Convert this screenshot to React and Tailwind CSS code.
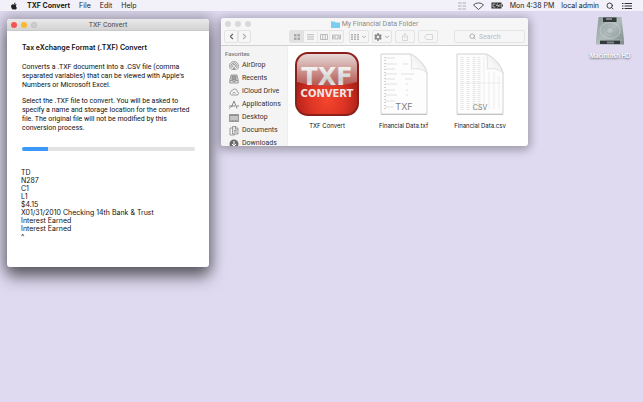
import { FaApple, FaCog } from "react-icons/fa"
import { Search, ChevronLeft, ChevronRight, ChevronDown } from "lucide-react"

const menus = ["File", "Edit", "Help"]

const records = ["TD", "N287", "C1", "L1", "$4.15", "X01/31/2010 Checking 14th Bank & Trust", "Interest Earned", "Interest Earned", "^"]

const SideIcon = ({ children }) => (
    <svg viewBox="0 0 20 20" className="w-[10px] h-[10px] shrink-0" fill="none" stroke="#808080" strokeWidth="1.5">
        {children}
    </svg>
)

const favorites = [
    {
        name: "AirDrop",
        icon: (
            <SideIcon>
                <path d="M5 17.500a9 9 0 1 1 10 0" />
                <path d="M6 14.500a6 6 0 1 1 8 0" />
                <path d="M8 12a3 3 0 1 1 4 0" />
                <path d="M10 11l4 7H6z" fill="#999" stroke="none" />
            </SideIcon>
        ),
    },
    {
        name: "Recents",
        icon: (
            <SideIcon>
                <path d="M4 2h12l2.5 11v5h-17v-5z" fill="#dcdcdc" />
                <path d="M6 4h8v8H6z" fill="#a0a0a0" stroke="#8a8a8a" />
                <path d="M2 13h5l1 2h4l1-2h5" />
            </SideIcon>
        ),
    },
    {
        name: "iCloud Drive",
        icon: (
            <SideIcon>
                <path d="M5 16a4 4 0 0 1-.5-7.500a3 3 0 0 1 3-2.500a5 5 0 0 1 9 3.500a3.300 3.300 0 0 1-.5 6.500z" />
                <path d="M7 13l3-3 3 3" />
            </SideIcon>
        ),
    },
    {
        name: "Applications",
        icon: (
            <SideIcon>
                <path d="M10 2L5 14M10 2l6 15M0 12h12M15 12h5M1 17l2-3" stroke="#666" />
            </SideIcon>
        ),
    },
    {
        name: "Desktop",
        icon: (
            <SideIcon>
                <path d="M1 3h18v14H1z" fill="#c4c4c4" />
                <path d="M1 5h18" />
                <path d="M3 15h14" strokeDasharray="2 1" />
            </SideIcon>
        ),
    },
    {
        name: "Documents",
        icon: (
            <SideIcon>
                <path d="M7 1h7l4 4v11H7z" fill="#e5e5e5" />
                <path d="M7 4H2v14h9v-2" />
                <path d="M13 1v5h5M10 9h5M10 12h5" />
            </SideIcon>
        ),
    },
    {
        name: "Downloads",
        icon: (
            <SideIcon>
                <circle cx="10" cy="10" r="9" fill="#6c6c6c" stroke="none" />
                <path d="M10 4v10M6 10l4 4 4-4" stroke="#fff" strokeWidth="2" />
            </SideIcon>
        ),
    },
]

const MenuBar = () => (
    <header className="relative z-10 flex h-[11px] items-center justify-between bg-[#f2f0f8] pl-[10px] pr-[11px] text-[7px] leading-[11px] text-[#222]">
        <nav className="flex items-center gap-[9px]">
            <button aria-label="Apple menu">
                <FaApple className="size-[8px]" />
            </button>
            <button className="font-bold">TXF Convert</button>
            {menus.map((menu) => (
                <button key={menu}>{menu}</button>
            ))}
        </nav>
        <div className="flex items-center gap-[7px]">
            <svg viewBox="0 0 16 16" className="size-[8px]" fill="#cfcdd6">
                <path d="M0 0h7v4H0zM9 0h7v4H9zM0 6h7v4H0zM9 6h7v4H9zM0 12h7v4H0zM9 12h7v4H9z" />
            </svg>
            <svg viewBox="0 0 22 16" className="h-[8px] w-[11px]" fill="none" stroke="#444" strokeWidth="1.800">
                <path d="M1 6a14 14 0 0 1 20 0L11 15z" />
            </svg>
            <svg viewBox="0 0 24 14" className="h-[7px] w-[12px]">
                <path d="M1 1h20v12H1zM22 5h2v4h-2z" fill="#333" />
                <path d="M4 4h5M4 10h5M4 4v6M13 3l-2 4h5l-3 4M18 4v6" stroke="#ddd" strokeWidth="1.500" fill="none" />
            </svg>
            <span>Mon 4:38 PM</span>
            <span>local admin</span>
            <Search className="size-[8px]" strokeWidth={2.5} />
            <svg viewBox="0 0 20 16" className="ml-[1px] h-[8px] w-[10px]" stroke="#333" strokeWidth="2">
                <path d="M0 3h3M5 3h15M0 8h3M5 8h15M0 13h3M5 13h15" />
            </svg>
        </div>
    </header>
)

const ConvertWindow = () => (
    <section className="absolute left-[7px] top-[19px] w-[202px] rounded-[3px] bg-white shadow-[0_0_12px_4px_rgba(0,0,0,0.22),0_10px_16px_rgba(0,0,0,0.5)]">
        <div className="relative flex h-[12px] items-center rounded-t-[3px] border-b border-[#c9c9c9] bg-linear-to-b from-[#e9e9e9] to-[#d3d3d3] px-[4px]">
            <div className="flex gap-[4px]">
                <button aria-label="Close" className="size-[6px] rounded-full bg-[#f4534e]" />
                <button aria-label="Minimize" className="size-[6px] rounded-full bg-[#fbb92f]" />
                <button aria-label="Zoom" disabled className="size-[6px] rounded-full border border-[#bfbfbf] bg-[#cfcfcf]" />
            </div>
            <h1 className="absolute inset-x-0 text-center font-[Roboto,sans-serif] text-[7px] leading-[12px] text-[#484848]">TXF Convert</h1>
        </div>
        <div className="px-[14px] pb-[26px] pt-[12px] text-[7px] text-[#111]">
            <h2 className="pl-[1px] font-semibold leading-[9px]">Tax eXchange Format (.TXF) Convert</h2>
            <p className="mt-[11px] pl-[1px] font-[Roboto,sans-serif] leading-[9px]">
                Converts a .TXF document into a .CSV file (comma<br />
                separated variables) that can be viewed with Apple's<br />
                Numbers or Microsoft Excel.
            </p>
            <p className="mt-[7px] pl-[1px] font-[Roboto,sans-serif] leading-[9px]">
                Select the .TXF file to convert. You will be asked to<br />
                specify a name and storage location for the converted<br />
                file. The original file will not be modified by this<br />
                conversion process.
            </p>
            <div role="progressbar" aria-label="Conversion" aria-valuenow={15} className="ml-[1px] mt-[14px] h-[4px] overflow-hidden rounded-full bg-[#e2e2e2]">
                <div className="h-full w-[15%] bg-[#3b99fc]" />
            </div>
            <div className="mt-[18px] leading-[8px]">
                {records.map((line, index) => (
                    <p key={index}>{line}</p>
                ))}
            </div>
        </div>
    </section>
)

const ToolButton = ({ label, className, children }) => (
    <button aria-label={label} className={`flex h-[13px] items-center justify-center rounded-[2px] border border-[#e3e3e3] ${className}`}>
        {children}
    </button>
)

const Toolbar = () => (
    <div className="flex items-center pb-[2px] pl-[3px] pr-[3px] text-[#a8a8a8]">
        <ToolButton label="Back" className="w-[14px]">
            <ChevronLeft className="size-[9px] text-[#666]" strokeWidth={3} />
        </ToolButton>
        <ToolButton label="Forward" className="w-[13px]">
            <ChevronRight className="size-[9px] text-[#b0b0b0]" strokeWidth={3} />
        </ToolButton>
        <div className="ml-[38px] flex h-[13px] overflow-hidden rounded-[2px] border border-[#e3e3e3]">
            <button aria-label="Icon view" className="flex w-[14px] items-center justify-center bg-[#e2e2e2]">
                <svg viewBox="0 0 12 12" className="size-[6px]" fill="#a8a8a8">
                    <path d="M0 0h5v5H0zM7 0h5v5H7zM0 7h5v5H0zM7 7h5v5H7z" />
                </svg>
            </button>
            <button aria-label="List view" className="flex w-[13px] items-center justify-center">
                <svg viewBox="0 0 14 12" className="h-[6px] w-[7px]" stroke="#b5b5b5" strokeWidth="1.500">
                    <path d="M0 1h14M0 4.500h14M0 8h14M0 11.500h14" />
                </svg>
            </button>
            <button aria-label="Column view" className="flex w-[13px] items-center justify-center border-x border-[#e8e8e8]">
                <svg viewBox="0 0 16 12" className="h-[6px] w-[8px] shrink-0" fill="none" stroke="#aaa" strokeWidth="1.500">
                    <path d="M1 1h14v10H1zM5.500 1v10M10.500 1v10" />
                </svg>
            </button>
            <button aria-label="Gallery view" className="flex w-[13px] items-center justify-center">
                <svg viewBox="0 0 18 12" className="h-[6px] w-[9px]" fill="none" stroke="#aaa" strokeWidth="1.500">
                    <path d="M1 1v10M3.500 1v10M6 2h6v8H6zM14.500 1v10M17 1v10" />
                </svg>
            </button>
        </div>
        <ToolButton label="Arrange" className="ml-[5px] w-[20px] gap-[2px]">
            <svg viewBox="0 0 16 12" className="h-[6px] w-[8px]" fill="#b0b0b0">
                <path d="M0 0h4v3H0zM6 0h4v3H6zM12 0h4v3h-4zM0 4.500h4v3H0zM6 4.500h4v3H6zM12 4.500h4v3h-4zM0 9h4v3H0zM6 9h4v3H6zM12 9h4v3h-4z" />
            </svg>
            <ChevronDown className="size-[6px]" strokeWidth={4} />
        </ToolButton>
        <ToolButton label="Action" className="ml-[3px] w-[20px] gap-[2px]">
            <FaCog className="size-[8px] text-[#8a8a8a]" />
            <ChevronDown className="size-[6px]" strokeWidth={4} />
        </ToolButton>
        <ToolButton label="Share" className="ml-[3px] w-[20px]">
            <svg viewBox="0 0 12 16" className="h-[8px] w-[6px]" fill="none" stroke="#ccc" strokeWidth="1.500">
                <path d="M4 6H1v9h10V6H8M6 11V1M3.500 3.500L6 1l2.500 2.500" />
            </svg>
        </ToolButton>
        <ToolButton label="Tags" className="ml-[3px] w-[20px]">
            <svg viewBox="0 0 18 12" className="h-[6px] w-[9px]" fill="none" stroke="#ccc" strokeWidth="1.500">
                <path d="M5 1h12v10H5L1 6z" />
            </svg>
        </ToolButton>
        <label className="ml-auto flex h-[13px] w-[71px] items-center gap-[3px] rounded-[2px] border border-[#e3e3e3] pl-[14px]">
            <Search className="size-[7px] shrink-0" strokeWidth={3} />
            <input aria-label="Search" placeholder="Search" className="w-full min-w-0 font-[Roboto,sans-serif] text-[7px] leading-[10px] placeholder:text-[#bbb] focus:outline-none" />
        </label>
    </div>
)

const AppIcon = () => (
    <svg viewBox="0 0 66 66" className="size-[66px]">
        <defs>
            <linearGradient id="gloss" x1="0" y1="0" x2="0" y2="1">
                <stop offset="0" stopColor="#e6dad8" />
                <stop offset="1" stopColor="#b4534c" />
            </linearGradient>
            <radialGradient id="glow" cx="0.5" cy="0.78" r="0.6">
                <stop offset="0" stopColor="#f5452e" />
                <stop offset="0.5" stopColor="#dc3424" />
                <stop offset="1" stopColor="#a31d15" />
            </radialGradient>
            <linearGradient id="steel" x1="0" y1="0" x2="0" y2="1">
                <stop offset="0" stopColor="#fff" />
                <stop offset="0.6" stopColor="#d0d0d0" />
                <stop offset="1" stopColor="#f8f8f8" />
            </linearGradient>
        </defs>
        <rect x="1" y="1" width="64" height="64" rx="13" fill="#8b1f19" />
        <rect x="3" y="3" width="60" height="60" rx="11" fill="url(#glow)" />
        <path d="M3 14a11 11 0 0 1 11-11h38a11 11 0 0 1 11 11v17q-30 8-60 0z" fill="url(#gloss)" />
        <g fontFamily="DejaVu Sans, sans-serif" fontWeight="700" textAnchor="middle">
            <text x="33" y="34" fontSize="24" fill="url(#steel)">TXF</text>
            <text x="33" y="46" fontSize="10" fill="#f0e4e2">CONVERT</text>
        </g>
    </svg>
)

const PageIcon = ({ kind }) => (
    <svg viewBox="0 0 50 64" className="h-[64px] w-[50px]">
        <defs>
            <linearGradient id={`fold-${kind}`} x1="0" y1="1" x2="1" y2="0">
                <stop offset="0" stopColor="#fff" />
                <stop offset="0.5" stopColor="#f4f4f4" />
                <stop offset="1" stopColor="#d4d4d4" />
            </linearGradient>
        </defs>
        <path d="M2 2h29c8 3 15 11 17 19v41H2z" fill="#fdfdfd" stroke="#d2d2d2" />
        <path d="M2 62.500h46" stroke="#c4c4c4" />
        {kind === "TXF" ? (
            <g stroke="#d2d2d2" strokeWidth="0.7">
                <path d="M6 5v54" strokeWidth="2" strokeDasharray="1 2" />
                <path d="M6 6h10M6 12h12M6 17h10M6 22h12M6 27h10M6 32h12M6 38h10M6 43h12M6 49h10M6 55h9M24 12h5M22 22h13M26 27h7M27 32h2M27 38h2M27 43h2" />
            </g>
        ) : (
            <g stroke="#dedede" fill="none">
                <path d="M7 5v54M13 5v54M19 5v54M24 5v54" strokeWidth="3" strokeDasharray="1 1" opacity="0.8" />
                <path d="M29 5v54M34 20v37M39 20v37M44 24v33M5 31h41" strokeWidth="0.5" />
            </g>
        )}
        <path d="M31 2c2 5 2 10 1 15 6-1 12 0 16 4C46 13 39 5 31 2z" fill={`url(#fold-${kind})`} stroke="#d2d2d2" strokeWidth="0.6" />
        <text x="25" y="58" textAnchor="middle" fontSize={kind === "TXF" ? 9 : 7} fill="#808080">{kind}</text>
    </svg>
)

const FinderWindow = () => (
    <section className="absolute left-[221px] top-[18px] w-[307px] overflow-hidden rounded-[3px] bg-white shadow-[0_2px_10px_2px_rgba(0,0,0,0.3)]">
        <div className="border-b border-[#d0d0d0] bg-[#f6f6f6]">
            <div className="relative flex h-[12px] items-center px-[4px]">
                <div className="flex gap-[4px]">
                    <button aria-label="Close" className="size-[6px] rounded-full bg-[#d9d9d9]" />
                    <button aria-label="Minimize" className="size-[6px] rounded-full bg-[#d9d9d9]" />
                    <button aria-label="Zoom" className="size-[6px] rounded-full bg-[#d9d9d9]" />
                </div>
                <div className="absolute inset-x-0 flex items-center justify-center gap-[2px] font-[Roboto,sans-serif] text-[7px] leading-[12px] text-[#8c8c8c]">
                    <svg viewBox="0 0 18 14" className="h-[7px] w-[9px]" fill="#7accf0">
                        <path d="M0 1h7l2 2h9v11H0z" />
                    </svg>
                    <h2>My Financial Data Folder</h2>
                </div>
            </div>
            <Toolbar />
        </div>
        <div className="flex h-[100px]">
            <aside className="w-[67px] shrink-0 overflow-hidden border-r border-[#eee] bg-[#f4f4f4] pl-[4px] pt-[3px] font-[Roboto,sans-serif]">
                <h3 className="text-[6px] font-medium leading-[10px] text-[#777]">Favorites</h3>
                <ul>
                    {favorites.map((item) => (
                        <li key={item.name}>
                            <a href="#" className="flex h-[13px] items-center gap-[3px] whitespace-nowrap pl-[4px] text-[7px] text-[#333]">
                                {item.icon}
                                {item.name}
                            </a>
                        </li>
                    ))}
                </ul>
            </aside>
            <div className="flex pl-[1px] pt-[5px] text-[6px] leading-[9px] text-[#111]">
                <figure className="flex w-[76px] flex-col items-center">
                    <AppIcon />
                    <figcaption className="mt-[4px]">TXF Convert</figcaption>
                </figure>
                <figure className="flex w-[77px] flex-col items-center">
                    <div className="flex h-[66px] items-center"><PageIcon kind="TXF" /></div>
                    <figcaption className="mt-[4px]">Financial Data.txf</figcaption>
                </figure>
                <figure className="flex w-[76px] flex-col items-center">
                    <div className="flex h-[66px] items-center"><PageIcon kind="CSV" /></div>
                    <figcaption className="mt-[4px]">Financial Data.csv</figcaption>
                </figure>
            </div>
        </div>
    </section>
)

const DiskIcon = () => (
    <a href="#" className="absolute right-[8px] top-[16px] flex w-[50px] flex-col items-center">
        <svg viewBox="0 0 56 60" className="h-[30px] w-[28px]">
            <defs>
                <linearGradient id="disk" x1="0" y1="0" x2="1" y2="1">
                    <stop offset="0" stopColor="#8f9b9c" />
                    <stop offset="0.5" stopColor="#b0bbbb" />
                    <stop offset="1" stopColor="#7c8889" />
                </linearGradient>
            </defs>
            <path d="M5 2h46l5 46v9H0v-9z" fill="url(#disk)" />
            <ellipse cx="28" cy="29" rx="20" ry="16" fill="none" stroke="#c4cece" strokeWidth="1.500" />
            <ellipse cx="28" cy="29" rx="7" ry="6" fill="#bac6c6" stroke="#8a9697" />
            <path d="M14 3h27v9H14zM8 49h40v7H8z" fill="#343a3b" />
            <path d="M20 4h12v4H20zM22 51h14v4H22z" fill="#7d8787" />
            <path d="M0 48h56" stroke="#b5bebe" />
        </svg>
        <span className="mt-[5px] whitespace-nowrap text-[6px] font-semibold leading-[9px] text-white [text-shadow:0_1px_2px_rgba(0,0,0,0.6)]">Macintosh HD</span>
    </a>
)

const App = () => (
    <div className="relative min-h-screen overflow-hidden bg-[#dfdaf0] font-[Inter,sans-serif]">
        <MenuBar />
        <main>
            <ConvertWindow />
            <FinderWindow />
            <DiskIcon />
        </main>
    </div>
)

export default App
